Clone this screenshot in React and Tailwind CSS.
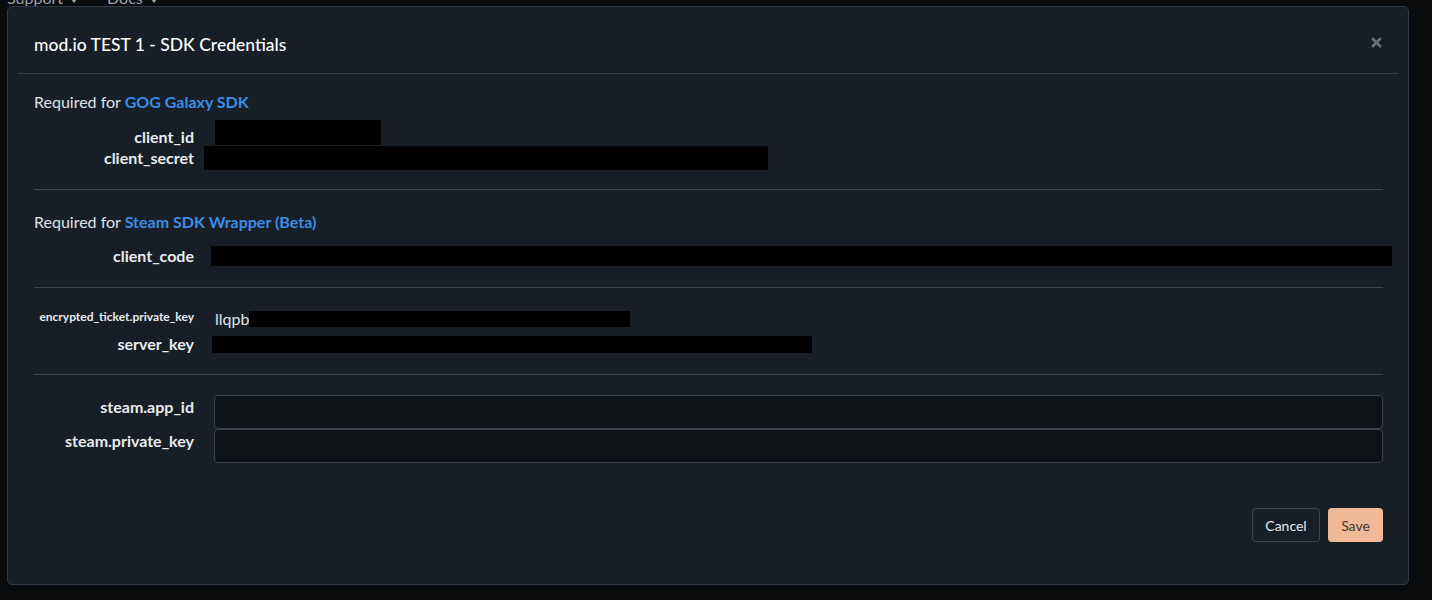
import { X } from 'lucide-react'

const Caret = () => (
  <svg width="8" height="5" viewBox="0 0 8 5" className="ml-[7px] mb-[5px] self-end">
    <path d="M0 0h8L4 5z" fill="currentColor" />
  </svg>
)

const Label = ({ children, className = '', size = 'text-[16px]' }) => (
  <div className={`w-[160px] shrink-0 text-right font-bold leading-5 text-[#e9ebee] ${size} ${className}`}>
    {children}
  </div>
)

const Redacted = ({ className }) => <div className={`bg-black ${className}`} />

const Divider = () => <div className="h-px bg-[#3a4550]" />

export default function App() {
  return (
    <div className="min-h-[600px] bg-[#0a0b0d] font-['Lato','Noto_Sans',sans-serif] overflow-hidden">
      {/* nav behind the modal */}
      <div className="h-[6px] overflow-hidden">
        <div className="flex -mt-[12px] text-[16px] leading-5 text-[#9aa2ab]">
          <span className="ml-[7px] flex">Support<Caret /></span>
          <span className="ml-[29px] flex">Docs<Caret /></span>
        </div>
      </div>

      <div className="ml-[7px] w-[1402px] h-[579px] rounded-[5px] border border-[#2e3945] bg-[#181e26] flex flex-col">
        {/* header */}
        <div className="mx-[10px] border-b border-[#333e49] flex items-center justify-between pl-4 pr-[14px] h-[67px]">
          <h4 className="text-[17.5px] font-medium text-white leading-6 mt-[10px]">mod.io TEST 1 - SDK Credentials</h4>
          <X size={15} strokeWidth={4} className="text-[#6b7079] mt-[4px]" />
        </div>

        {/* body */}
        <div className="pl-[26px] pr-[25px] pt-[18px]">
          <p className="text-[16px] leading-5 text-[#dfe2e6]">
            Required for <a className="text-[#3a8ee6] font-bold">GOG Galaxy SDK</a>
          </p>
          <div className="mt-[8px] flex h-[26px]">
            <Label className="mt-[7px]">client_id</Label>
            <Redacted className="ml-[21px] w-[166px] h-[25px]" />
          </div>
          <div className="flex h-[24px]">
            <Label className="mt-[2px]">client_secret</Label>
            <Redacted className="ml-[10px] w-[564px] h-[24px]" />
          </div>
          <div className="mt-[19px]"><Divider /></div>

          <p className="mt-[22px] text-[16px] leading-5 text-[#dfe2e6]">
            Required for <a className="text-[#3a8ee6] font-bold">Steam SDK Wrapper (Beta)</a>
          </p>
          <div className="mt-[14px] flex items-center h-[20px]">
            <Label>client_code</Label>
            <Redacted className="ml-[17px] w-[1181px] h-[20px] shrink-0" />
          </div>
          <div className="mt-[21px]"><Divider /></div>

          <div className="mt-[21px] flex items-center h-[20px]">
            <Label size="text-[12px]" className="-mt-[4px]">encrypted_ticket.private_key</Label>
            <span className="ml-[21px] text-[16px] text-[#dfe2e6] leading-5">llqpb</span>
            <Redacted className="w-[381px] h-[16px]" />
          </div>
          <div className="mt-[5px] flex items-center h-[20px]">
            <Label>server_key</Label>
            <Redacted className="ml-[18px] w-[600px] h-[17px]" />
          </div>
          <div className="mt-[20px]"><Divider /></div>

          <div className="mt-[20px] flex">
            <Label className="pt-[2px]">steam.app_id</Label>
            <input className="ml-[20px] flex-1 h-[34px] rounded-[4px] border border-[#38444f] bg-[#0e1115] outline-none" />
          </div>
          <div className="flex">
            <Label className="pt-[2px]">steam.private_key</Label>
            <input className="ml-[20px] flex-1 h-[34px] rounded-[4px] border border-[#38444f] bg-[#0e1115] outline-none" />
          </div>

          <div className="mt-[45px] flex justify-end gap-2">
            <button className="w-[68px] h-[34px] rounded-[4px] border border-[#38444f] text-[14px] text-[#e6e8eb]">Cancel</button>
            <button className="w-[55px] h-[34px] rounded-[4px] bg-[#efb897] text-[14px] text-[#46392f]">Save</button>
          </div>
        </div>
      </div>
    </div>
  )
}
